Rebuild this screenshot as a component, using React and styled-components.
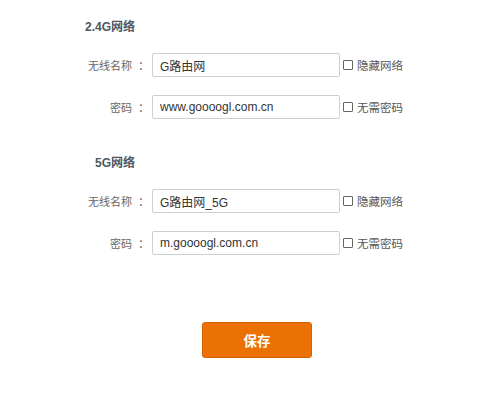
import React from "react";
import styled, { createGlobalStyle } from "styled-components";

const Global = createGlobalStyle`
  html, body { margin: 0; padding: 0; background: #fff; }
  body { font-family: "Liberation Sans", Arial, "Noto Sans CJK SC", sans-serif; }
`;

const Page = styled.div`
  width: 500px;
  height: 415px;
  padding-top: 19px;
  box-sizing: border-box;
  display: flex;
  flex-direction: column;
`;

const Section = styled.section`
  display: flex;
  flex-direction: column;
  gap: 18px;
  & + & { margin-top: 36px; }
`;

const Heading = styled.h3`
  margin: 0;
  width: 148px;
  box-sizing: border-box;
  padding-right: 13px;
  text-align: right;
  font-size: 12px;
  line-height: 16px;
  font-weight: bold;
  color: #4b5862;
`;

const Row = styled.div`
  display: grid;
  grid-template-columns: 148px 188px auto;
  column-gap: 4px;
  align-items: center;
  height: 24px;
`;

const Label = styled.label`
  display: flex;
  justify-content: flex-end;
  align-items: center;
  font-size: 11px;
  color: #666;
  font-family: "Noto Sans CJK SC", sans-serif;
`;

const Colon = styled.span`
  width: 16px;
  padding-left: 6px;
  box-sizing: border-box;
  font-size: 11.5px;
`;

const Input = styled.input`
  box-sizing: border-box;
  width: 188px;
  height: 24px;
  border: 1px solid #cfcfcf;
  border-radius: 2px;
  padding: 0 7px;
  font-size: 12px;
  color: #333;
  font-family: "Liberation Sans", Arial, "Noto Sans CJK SC", sans-serif;
  outline: none;
`;

const Check = styled.label`
  display: flex;
  align-items: center;
  gap: 4px;
  margin-left: -1px;
  font-size: 11.5px;
  color: #555;
  font-family: "Noto Sans CJK SC", sans-serif;
`;

const Box = styled.span`
  width: 8px;
  height: 8px;
  border: 1px solid #666;
  border-radius: 1px;
  background: #fff;
`;

const Actions = styled.div`
  display: flex;
  justify-content: center;
  padding-left: 14px;
  margin-top: 67px;
`;

const Button = styled.button`
  width: 110px;
  height: 36px;
  background: #eb7105;
  border: 1px solid #d36300;
  border-radius: 3px;
  color: #fff;
  font-size: 13.5px;
  font-weight: bold;
  font-family: "Noto Sans CJK SC", sans-serif;
  cursor: pointer;
`;

const Field = ({ label, value, check }) => (
  <Row>
    <Label>
      {label}
      <Colon>：</Colon>
    </Label>
    <Input defaultValue={value} />
    <Check>
      <Box />
      {check}
    </Check>
  </Row>
);

export default function App() {
  return (
    <>
      <Global />
      <Page>
        <Section>
          <Heading>2.4G网络</Heading>
          <Field label="无线名称" value="G路由网" check="隐藏网络" />
          <Field label="密码" value="www.goooogl.com.cn" check="无需密码" />
        </Section>
        <Section>
          <Heading>5G网络</Heading>
          <Field label="无线名称" value="G路由网_5G" check="隐藏网络" />
          <Field label="密码" value="m.goooogl.com.cn" check="无需密码" />
        </Section>
        <Actions>
          <Button>保存</Button>
        </Actions>
      </Page>
    </>
  );
}
